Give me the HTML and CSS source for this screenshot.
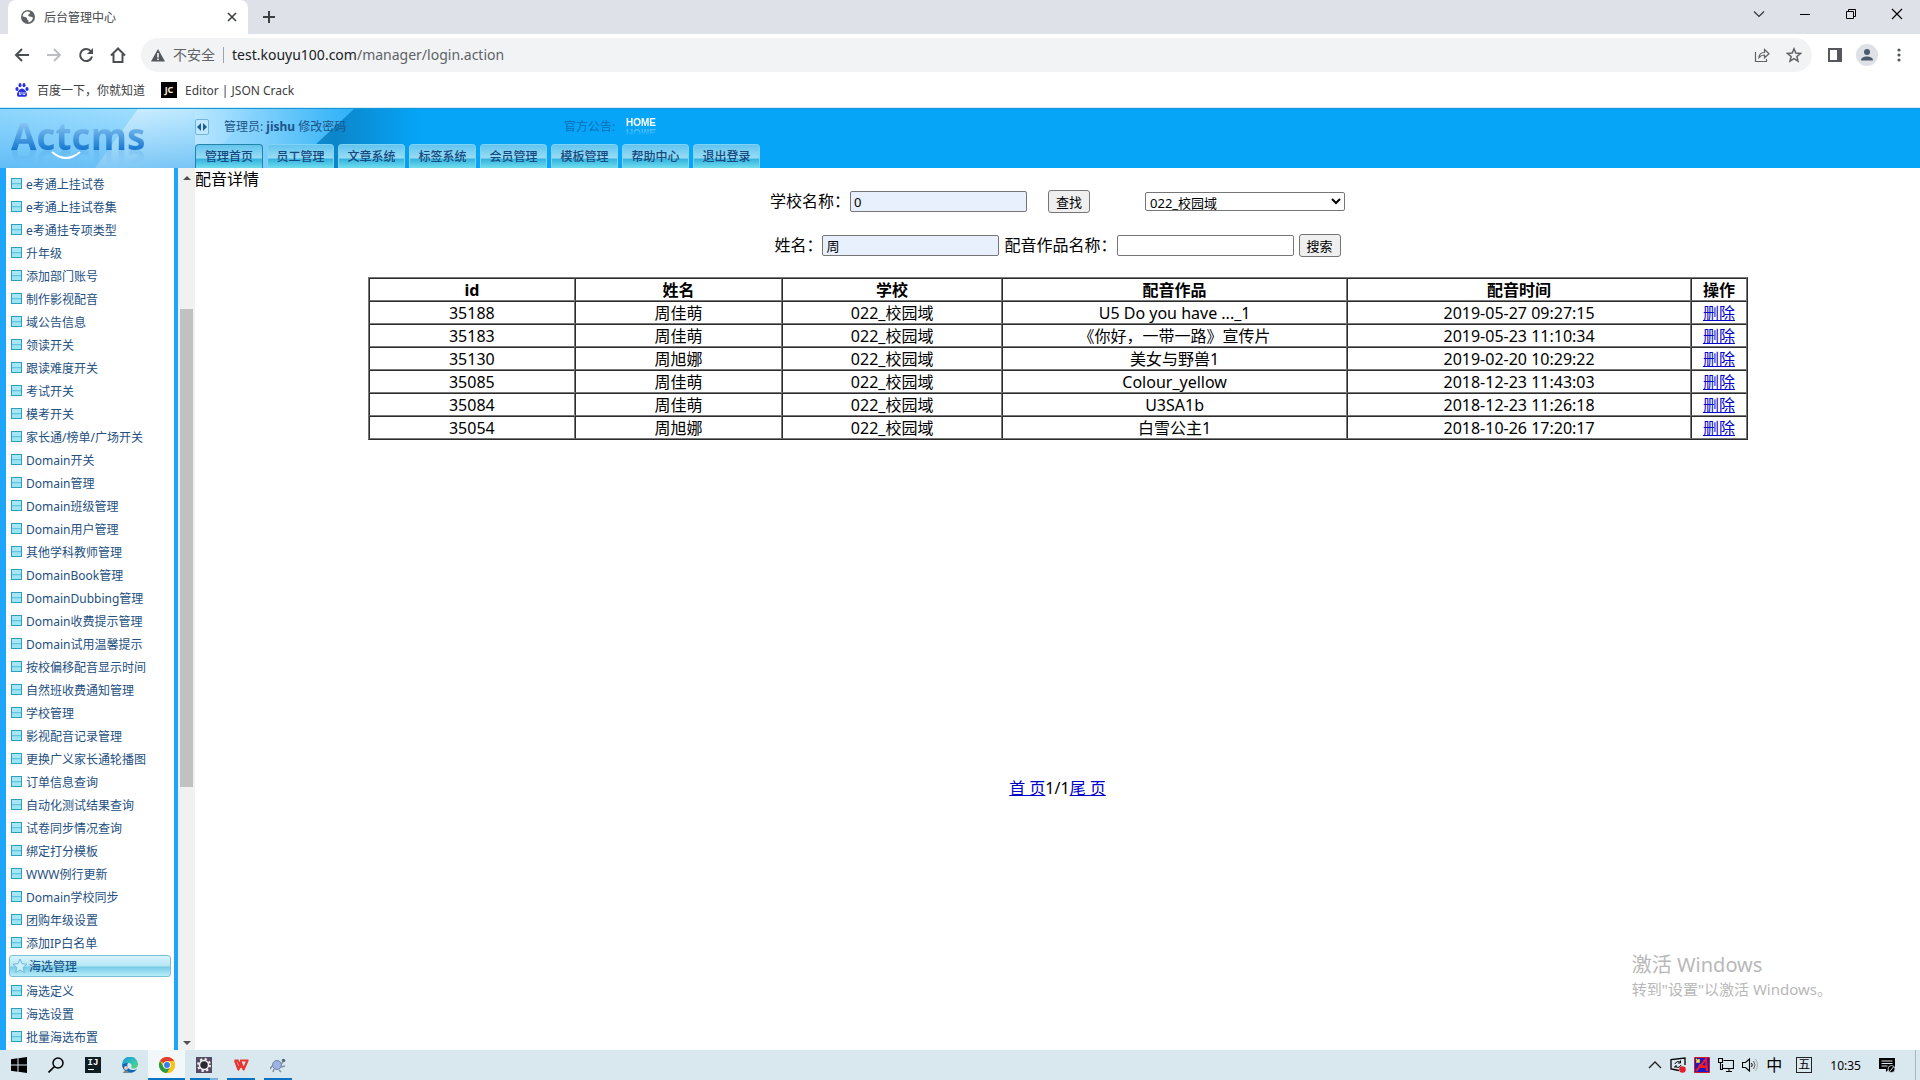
FILE: index.html
```html
<!DOCTYPE html>
<html lang="zh-CN">
<head>
<meta charset="utf-8">
<title>后台管理中心</title>
<link rel="stylesheet" href="styles.css">
</head>
<body>
<div class="screen">
  <div class="tabstrip">
    <div class="browser-tab">
      <svg width="16" height="16" viewBox="0 0 16 16"><circle cx="8" cy="8" r="7" fill="#5f6368"/><path d="M7 2.500c2 0 3 .6 3 1.600 0 1.200-1.600 1-1.800 2.200-.2 1 1 1.200 2 1.200 1.200 0 1.400 1 2.800 1-.3 2.500-2 4.500-4.500 5V12c0-1-1.500-1-1.500-2.200 0-1.300-1-1.500-2.200-1.800L2.600 7.200C3 4.500 4.800 2.700 7 2.500z" fill="#fff"/></svg>
      <span class="browser-tab-title">后台管理中心</span>
      <button class="icon-btn" aria-label="关闭标签"><svg width="10" height="10" viewBox="0 0 10 10"><path d="M1 1l8 8M9 1l-8 8" stroke="#3c4043" stroke-width="1.600"/></svg></button>
    </div>
    <button class="icon-btn" aria-label="新标签页"><svg width="14" height="14" viewBox="0 0 14 14"><path d="M7 1v12M1 7h12" stroke="#3c4043" stroke-width="2"/></svg></button>
    <div class="window-controls">
      <button class="icon-btn" aria-label="搜索标签"><svg width="12" height="12" viewBox="0 0 12 12"><path d="M1 3.500l5 5 5-5" fill="none" stroke="#333" stroke-width="1.200"/></svg></button>
      <button class="icon-btn" aria-label="最小化"><svg width="12" height="12" viewBox="0 0 12 12"><path d="M1 6.500h10" stroke="#000"/></svg></button>
      <button class="icon-btn" aria-label="还原"><svg width="12" height="12" viewBox="0 0 12 12"><path d="M1.500 3.500h7v7h-7zM3.500 3.500v-2h7v7h-2" fill="none" stroke="#000"/></svg></button>
      <button class="icon-btn" aria-label="关闭"><svg width="12" height="12" viewBox="0 0 12 12"><path d="M1 1l10 10M11 1L1 11" stroke="#000" stroke-width="1.200"/></svg></button>
    </div>
  </div>

  <div class="toolbar">
    <div class="nav-buttons">
      <button class="icon-btn" aria-label="后退"><svg width="16" height="16" viewBox="0 0 16 16"><path d="M15 8H2M8 2L2 8l6 6" fill="none" stroke="#4b4f54" stroke-width="2"/></svg></button>
      <button class="icon-btn" aria-label="前进"><svg width="16" height="16" viewBox="0 0 16 16"><path d="M1 8h13M8 2l6 6-6 6" fill="none" stroke="#bcbec1" stroke-width="2"/></svg></button>
      <button class="icon-btn" aria-label="刷新"><svg width="16" height="16" viewBox="0 0 16 16"><path d="M13 4.500A6 6 0 1 0 14 9.500" fill="none" stroke="#4b4f54" stroke-width="2"/><path d="M15 1v6H9z" fill="#4b4f54"/></svg></button>
      <button class="icon-btn" aria-label="主页"><svg width="16" height="16" viewBox="0 0 16 16"><path d="M1 8.500L8 1.500l7 7M3.500 7v8h9V7" fill="none" stroke="#4b4f54" stroke-width="2"/></svg></button>
    </div>
    <div class="omnibox">
      <svg width="14" height="14" viewBox="0 0 14 14"><path d="M7 1l7 12.500H0z" fill="#54585d"/><path d="M7 5v4.500M7 10.500v1.500" stroke="#fff" stroke-width="1.500"/></svg>
      <span class="insecure">不安全</span>
      <span class="url"><b>test.kouyu100.com</b>/manager/login.action</span>
      <button class="icon-btn" aria-label="分享"><svg width="16" height="16" viewBox="0 0 16 16"><path d="M1.500 5v9.500h11V12M5 10.500c.3-3.500 2.500-5 5.500-5V2.500L15 6.800l-4.500 4V8C8 8 6.500 8.800 5 10.500z" fill="none" stroke="#5f6368" stroke-width="1.200"/></svg></button>
      <button class="icon-btn" aria-label="收藏"><svg width="16" height="16" viewBox="0 0 16 16"><path d="M8 1.800l1.800 4.300 4.700.4-3.600 3 1.100 4.600L8 11.700l-4 2.400 1.100-4.600-3.600-3 4.700-.4z" fill="none" stroke="#5f6368" stroke-width="1.500"/></svg></button>
    </div>
    <div class="toolbar-right">
      <button class="icon-btn" aria-label="侧边栏"><svg width="14" height="14" viewBox="0 0 14 14"><path d="M1 1h12v12H1z" fill="none" stroke="#54585d" stroke-width="2"/><path d="M9 1h4v12H9z" fill="#54585d"/></svg></button>
      <button class="icon-btn" aria-label="用户"><svg width="22" height="22" viewBox="0 0 22 22"><circle cx="11" cy="11" r="11" fill="#dee1e8"/><circle cx="11" cy="8" r="3" fill="#4c5a6e"/><path d="M5 16.500c0-3 3-4 6-4s6 1 6 4z" fill="#4c5a6e"/></svg></button>
      <button class="icon-btn" aria-label="更多"><svg width="14" height="14" viewBox="0 0 14 14"><g fill="#54585d"><circle cx="7" cy="2" r="1.600"/><circle cx="7" cy="7" r="1.600"/><circle cx="7" cy="12" r="1.600"/></g></svg></button>
    </div>
  </div>

  <div class="bookmarks">
    <a href="#"><svg width="14" height="14" viewBox="0 0 14 14"><g fill="#2932e1"><ellipse cx="2" cy="6" rx="1.600" ry="2"/><ellipse cx="5" cy="2.200" rx="1.500" ry="2.100"/><ellipse cx="9" cy="2.200" rx="1.500" ry="2.100"/><ellipse cx="12" cy="6" rx="1.600" ry="2"/><path d="M7 5.500c2 0 5 3.500 5 6 0 3-3 2.200-5 2.200s-5 .8-5-2.200c0-2.500 3-6 5-6z"/></g><path d="M4.500 9v2.500h1.500V9M8 9v2.500h2V9" fill="none" stroke="#fff" stroke-width=".8"/></svg><span>百度一下，你就知道</span></a>
    <a href="#"><span class="jc">JC</span><span>Editor | JSON Crack</span></a>
  </div>

  <header class="site-header">
    <svg class="header-art" width="420" height="59" viewBox="0 0 420 59" preserveAspectRatio="none">
      <defs>
        <linearGradient id="sky" x1="0" y1="0" x2="1" y2="0"><stop offset="0" stop-color="#8ed6fd"/><stop offset=".45" stop-color="#a6e0ff"/><stop offset=".62" stop-color="#7fd0fc"/><stop offset=".8" stop-color="#3bb6f8"/><stop offset="1" stop-color="#06a5f8"/></linearGradient>
        <linearGradient id="ray" x1="0" y1="0" x2="1" y2="0"><stop offset="0" stop-color="#fff" stop-opacity=".6"/><stop offset="1" stop-color="#fff" stop-opacity="0"/></linearGradient>
        <linearGradient id="shade" x1="0" y1="0" x2="1" y2="0"><stop offset="0" stop-color="#1590d6"/><stop offset=".35" stop-color="#0c86ca"/><stop offset="1" stop-color="#06a5f8"/></linearGradient>
        <linearGradient id="deep" x1="0" y1="0" x2="0" y2="1"><stop offset="0" stop-color="#4bb4f5" stop-opacity="0"/><stop offset="1" stop-color="#3fa9ef" stop-opacity=".55"/></linearGradient>
      </defs>
      <path d="M0 0h420v59H0z" fill="url(#sky)"/>
      <path d="M138 0h120l-60 59H95z" fill="url(#ray)"/>
      <path d="M0 0h195v59H0z" fill="url(#deep)"/>
      <path d="M354 0h66v59H290z" fill="url(#shade)"/>
    </svg>
    <div class="logo"><span class="logo-text">Actcms</span><svg class="logo-smile" width="34" height="10" viewBox="0 0 34 10"><path d="M2 1q14 12 28 0" fill="none" stroke="#fff" stroke-width="2"/></svg></div>
    <div class="header-main">
      <div class="header-info">
        <button class="toggle" aria-label="切换侧栏"><svg width="10" height="8" viewBox="0 0 10 8"><path d="M4 0v8L0 4zM6 0v8l4-4z" fill="#1a5c96"/></svg></button>
        <span class="admin">管理员: <b>jishu</b> <a href="#">修改密码</a></span>
        <span class="notice">官方公告:</span>
        <a class="home" href="#">HOME</a>
      </div>
      <nav class="main-nav">
        <a href="#">管理首页</a><a href="#">员工管理</a><a href="#">文章系统</a><a href="#">标签系统</a><a href="#">会员管理</a><a href="#">模板管理</a><a href="#">帮助中心</a><a href="#">退出登录</a>
      </nav>
    </div>
  </header>

  <div class="workspace">
    <aside class="sidebar">
      <ul class="menu">
        <li><a href="#">e考通上挂试卷</a></li>
        <li><a href="#">e考通上挂试卷集</a></li>
        <li><a href="#">e考通挂专项类型</a></li>
        <li><a href="#">升年级</a></li>
        <li><a href="#">添加部门账号</a></li>
        <li><a href="#">制作影视配音</a></li>
        <li><a href="#">域公告信息</a></li>
        <li><a href="#">领读开关</a></li>
        <li><a href="#">跟读难度开关</a></li>
        <li><a href="#">考试开关</a></li>
        <li><a href="#">模考开关</a></li>
        <li><a href="#">家长通/榜单/广场开关</a></li>
        <li><a href="#">Domain开关</a></li>
        <li><a href="#">Domain管理</a></li>
        <li><a href="#">Domain班级管理</a></li>
        <li><a href="#">Domain用户管理</a></li>
        <li><a href="#">其他学科教师管理</a></li>
        <li><a href="#">DomainBook管理</a></li>
        <li><a href="#">DomainDubbing管理</a></li>
        <li><a href="#">Domain收费提示管理</a></li>
        <li><a href="#">Domain试用温馨提示</a></li>
        <li><a href="#">按校偏移配音显示时间</a></li>
        <li><a href="#">自然班收费通知管理</a></li>
        <li><a href="#">学校管理</a></li>
        <li><a href="#">影视配音记录管理</a></li>
        <li><a href="#">更换广义家长通轮播图</a></li>
        <li><a href="#">订单信息查询</a></li>
        <li><a href="#">自动化测试结果查询</a></li>
        <li><a href="#">试卷同步情况查询</a></li>
        <li><a href="#">绑定打分模板</a></li>
        <li><a href="#">WWW例行更新</a></li>
        <li><a href="#">Domain学校同步</a></li>
        <li><a href="#">团购年级设置</a></li>
        <li><a href="#">添加IP白名单</a></li>
      </ul>
      <h2 class="menu-head"><svg width="16" height="16" viewBox="0 0 16 16"><path d="M8 1l2 4.700 5 .5-3.800 3.300 1.200 5L8 12l-4.400 2.500 1.200-5L1 6.200l5-.5z" fill="#c9f0fb" stroke="#6db9da"/></svg>海选管理</h2>
      <ul class="menu">
        <li><a href="#">海选定义</a></li>
        <li><a href="#">海选设置</a></li>
        <li><a href="#">批量海选布置</a></li>
      </ul>
    </aside>
    <div class="scrollbar">
      <span class="arrow-up"></span>
      <span class="thumb"></span>
      <span class="arrow-down"></span>
    </div>

    <main class="content">
      <h1>配音详情</h1>
      <form class="filters school-row">
        <div class="field"><label for="school">学校名称：</label><input id="school" class="filled" type="text" value="0"></div>
        <button type="button" class="find">查找</button>
        <select aria-label="校园域" class="domain"><option>022_校园域</option></select>
      </form>
      <form class="filters">
        <div class="field"><label for="person">姓名：</label><input id="person" class="filled" type="text" value="周"></div>
        <div class="field"><label for="work">配音作品名称：</label><input id="work" type="text"></div>
        <button type="button">搜索</button>
      </form>
      <div class="results">
        <table>
          <colgroup><col class="c15"><col class="c15"><col class="c16"><col class="c25"><col class="c25"><col class="c4"></colgroup>
          <thead><tr><th>id</th><th>姓名</th><th>学校</th><th>配音作品</th><th>配音时间</th><th>操作</th></tr></thead>
          <tbody>
            <tr><td>35188</td><td>周佳萌</td><td>022_校园域</td><td>U5 Do you have ..._1</td><td>2019-05-27 09:27:15</td><td><a href="#">删除</a></td></tr>
            <tr><td>35183</td><td>周佳萌</td><td>022_校园域</td><td>《你好，一带一路》宣传片</td><td>2019-05-23 11:10:34</td><td><a href="#">删除</a></td></tr>
            <tr><td>35130</td><td>周旭娜</td><td>022_校园域</td><td>美女与野兽1</td><td>2019-02-20 10:29:22</td><td><a href="#">删除</a></td></tr>
            <tr><td>35085</td><td>周佳萌</td><td>022_校园域</td><td>Colour_yellow</td><td>2018-12-23 11:43:03</td><td><a href="#">删除</a></td></tr>
            <tr><td>35084</td><td>周佳萌</td><td>022_校园域</td><td>U3SA1b</td><td>2018-12-23 11:26:18</td><td><a href="#">删除</a></td></tr>
            <tr><td>35054</td><td>周旭娜</td><td>022_校园域</td><td>白雪公主1</td><td>2018-10-26 17:20:17</td><td><a href="#">删除</a></td></tr>
          </tbody>
        </table>
      </div>
      <div class="pager"><a href="#">首 页</a>1/1<a href="#">尾 页</a></div>
    </main>
    <div class="watermark"><p class="wm-title">激活 Windows</p><p>转到"设置"以激活 Windows。</p></div>
  </div>

  <footer class="taskbar">
    <button class="task" aria-label="开始"><svg width="16" height="16" viewBox="0 0 16 16"><path d="M0 2.300L6.500 1.300v6.200H0zM7.500 1.200L16 0v7.500H7.500zM0 8.500h6.500v6.200L0 13.700zM7.500 8.500H16V16l-8.500-1.200z"/></svg></button>
    <button class="task" aria-label="搜索"><svg width="16" height="16" viewBox="0 0 16 16"><circle cx="10" cy="6" r="5" fill="none" stroke="#000" stroke-width="1.500"/><path d="M6.500 9.500L.5 15.500" stroke="#000" stroke-width="1.600"/></svg></button>
    <button class="task" aria-label="IntelliJ"><span class="ij">IJ</span></button>
    <button class="task" aria-label="Edge"><svg width="16" height="16" viewBox="0 0 16 16"><defs><linearGradient id="edge" x1="0" y1="0" x2="1" y2="1"><stop offset="0" stop-color="#1793d8"/><stop offset=".6" stop-color="#35c5b5"/><stop offset="1" stop-color="#5fd267"/></linearGradient></defs><path d="M0 8a8 8 0 0 1 16-1c.2 3-2 4.500-4.500 4.500-2 0-2.500-1-2-2C10 8 9 6 6.500 6 3.500 6 1 8 0 10z" fill="url(#edge)"/><path d="M.2 8.500C1.500 6.500 4 5.700 6 6.300 4 9 6 13 10.500 13c2 0 3.500-.5 4.500-1.300A8 8 0 0 1 .2 8.500z" fill="#1167b5"/><circle cx="4" cy="11" r="2" fill="#e8c9b4"/><path d="M.5 16q3.500-5 7 0z" fill="#7d8792"/></svg></button>
    <button class="task active running" aria-label="Chrome"><svg width="16" height="16" viewBox="0 0 16 16"><circle cx="8" cy="8" r="8" fill="#fbc116"/><path d="M8 8L1.070 4A8 8 0 0 1 14.930 4z" fill="#e33b2e"/><path d="M1.070 4L8 16A8 8 0 0 1 1.070 4z" fill="#229a47"/><path d="M8 4.200h6.950L14.900 4H8z" fill="#e33b2e"/><path d="M4.700 9.900L8 16l3.300-6.100z" fill="#229a47"/><path d="M11.300 9.900L8 16a8 8 0 0 0 6.930-12H8z" fill="#fbc116"/><circle cx="8" cy="8" r="3.800" fill="#fff"/><circle cx="8" cy="8" r="3" fill="#3b7ded"/></svg></button>
    <button class="task running multi" aria-label="工具"><svg width="16" height="16" viewBox="0 0 16 16"><path d="M0 0h16v16H0z" fill="#544a63"/><circle cx="8" cy="8" r="6" fill="none" stroke="#eee" stroke-width="2" stroke-dasharray="2.300 2.400"/><circle cx="8" cy="8" r="4.500" fill="#2b2836" stroke="#eee" stroke-width="1.500"/></svg></button>
    <button class="task running" aria-label="WPS"><svg width="16" height="16" viewBox="0 0 16 16"><path d="M1.500 3.500h4M7 3.500h8.500M2 3.500l3.500 9 2.500-7 2.500 7 4-9M5 4l3 7" fill="none" stroke="#e8352c" stroke-width="2.200" stroke-linejoin="round"/></svg></button>
    <button class="task running" aria-label="客户端"><svg width="16" height="16" viewBox="0 0 16 16"><ellipse cx="7" cy="8" rx="4.500" ry="4.500" fill="#9bb2e2" stroke="#7384a8"/><circle cx="13.500" cy="3.500" r="1.800" fill="#536f83"/><path d="M2 9l-2 3M4 12l-1 3M9 13l2 2M11 10l4-1M11 7l2-2" stroke="#7e909e" stroke-width="1.500"/></svg></button>
    <div class="tray">
      <svg width="14" height="14" viewBox="0 0 14 14"><path d="M1 10l6-6 6 6" fill="none" stroke="#222" stroke-width="1.300"/></svg>
      <svg width="16" height="16" viewBox="0 0 16 16"><path d="M9 13.500L1 12V2.500L15 1v7" fill="none" stroke="#000" stroke-width="1.300"/><path d="M5 7c1-3 5-3 5.500-1M10.500 3.500V6H8M11 8c-1 3-5 3-5.500 1M5 11V9h2" fill="none" stroke="#000"/><circle cx="12.500" cy="12.500" r="3.300" fill="#e41f2b"/></svg>
      <svg width="16" height="16" viewBox="0 0 16 16"><path d="M.5.500h15v15H.5z" fill="#1c18c8" stroke="#d41b22"/><path d="M2 2l3 3M2 5h3V2" stroke="#ffe438" stroke-width="1.500"/><path d="M2 14L12 2l1 12M4 10h9l-8-2" fill="none" stroke="#f01c24" stroke-width="2"/></svg>
      <svg width="16" height="16" viewBox="0 0 16 16"><path d="M5.500 3.500h10v8h-11V7M8 14.500h6M11 11.500v3M.5 1.500h4v4h-4zM2.500 5.500v7H5" fill="none" stroke="#000" stroke-width="1.100"/></svg>
      <svg width="16" height="16" viewBox="0 0 16 16"><path d="M.5 5.500h3l4-3.500v12l-4-3.500h-3z" fill="none" stroke="#000" stroke-width="1.100"/><path d="M9.500 6q1.500 2 0 4" fill="none" stroke="#000"/><path d="M11.500 4q3 4 0 8" fill="none" stroke="#555"/><path d="M13.500 2q4 6 0 12" fill="none" stroke="#aaa"/></svg>
      <span class="ime">中</span>
      <span class="wubi">五</span>
      <span class="clock">10:35</span>
      <svg width="16" height="16" viewBox="0 0 16 16"><path d="M0 1h16v11h-6l-3 3v-3H0z"/><path d="M2.500 4h11M2.500 6.500h11M2.500 9h6" stroke="#d9e7ed"/><circle cx="12.500" cy="12" r="3.500" fill="#000" stroke="#d9e7ed" stroke-width=".8"/><path d="M11 14l3.500-4" stroke="#d9e7ed"/></svg>
    </div>
  </footer>
</div>
</body>
</html>
```
FILE: styles.css
```css
* { box-sizing: border-box; }
body { margin: 0; background: #fff; color: #000; font: 16px/21px "Noto Sans", "Noto Sans CJK SC", sans-serif; }
button, input, select { font-family: inherit; margin: 0; }
h1, h2, p, ul { margin: 0; padding: 0; }
a { color: inherit; text-decoration: none; }
svg { display: block; flex: none; }

.screen { height: 100vh; display: flex; flex-direction: column; overflow: hidden; }
.screen > * { flex: none; }
.icon-btn { display: flex; padding: 0; border: 0; background: none; }

/* browser chrome */
.tabstrip { display: flex; align-items: center; height: 34px; padding-left: 8px; background: #dee1e8; }
.browser-tab { display: flex; align-items: center; gap: 8px; width: 240px; height: 34px; margin-right: 14px; padding: 0 11px 0 12px; background: #fff; border-radius: 8px 8px 0 0; color: #45494d; font-size: 12px; }
.browser-tab-title { flex: 1; }
.window-controls { display: flex; gap: 34px; margin-left: auto; padding: 0 17px 6px 0; }
.toolbar { display: flex; align-items: center; height: 41px; padding: 0 14px; }
.nav-buttons { display: flex; gap: 16px; margin-right: 15px; }
.omnibox { flex: 1; display: flex; align-items: center; gap: 8px; height: 34px; padding: 0 10px; background: #f1f3f4; border-radius: 17px; color: #5f6368; font-size: 14px; }
.omnibox .icon-btn + .icon-btn { margin-left: 8px; }
.insecure { padding-right: 8px; border-right: 1px solid #a0a3a6; line-height: 16px; }
.url { flex: 1; }
.url b { color: #202124; font-weight: 400; }
.toolbar-right { display: flex; align-items: center; gap: 14px; margin-left: 16px; }
.bookmarks { display: flex; gap: 16px; height: 33px; padding: 0 15px 2px; border-bottom: 1px solid #d3eefb; }
.bookmarks a { display: flex; align-items: center; gap: 8px; color: #3c4043; font-size: 12px; }
.jc { width: 16px; height: 16px; background: #000; color: #f5e6d4; font-size: 9px; font-weight: 700; line-height: 16px; text-align: center; }

/* site header */
.site-header { position: relative; display: flex; height: 60px; background: #06a5f8; border-top: 1px solid #1895d4; color: #1c5489; font-size: 12px; }
.header-art { position: absolute; left: 0; top: 0; }
.logo { position: relative; width: 195px; padding: 5px 0 0 11px; }
.logo-text { display: block; width: 140px; height: 44px; font: 700 37px/44px "Open Sans", sans-serif; color: transparent; background: linear-gradient(#8cc8f5 8px, #1677d0 36px) text; -webkit-background-clip: text; -webkit-box-reflect: below -16px linear-gradient(transparent 50%, rgba(0, 0, 0, .25)); }
.logo-smile { position: absolute; left: 50px; top: 42px; }
.header-main { position: relative; display: flex; flex-direction: column; justify-content: space-between; }
.header-info { display: flex; align-items: center; height: 35px; }
.toggle { display: flex; align-items: center; justify-content: center; width: 14px; height: 16px; padding: 0; margin-right: 15px; background: #bfe8fd; border: 1px solid #6fb5e0; border-radius: 2px; }
.admin { width: 340px; }
.notice { width: 62px; color: #0a6fb8; }
.home { height: 12px; margin-bottom: 8px; color: #fff; font: 700 10px/12px "Liberation Sans", sans-serif; -webkit-box-reflect: below -3px linear-gradient(transparent 20%, rgba(0, 0, 0, .5)); }
.main-nav { display: flex; gap: 4px; }
.main-nav a { width: 67px; height: 24px; border: 1px solid #7fd3f5; border-bottom: 0; border-radius: 4px 4px 0 0; background: linear-gradient(#62c4ef, #98dcf4 13px, #34b3df 14px, #6fdcec); color: #16497f; font-weight: 500; line-height: 23px; text-align: center; }
.main-nav a:first-child { width: 68px; border-color: #2583a8; }

/* workspace */
.screen > .workspace { position: relative; flex: 1; min-height: 0; display: flex; }
.sidebar { flex: none; width: 178px; padding: 5px 3px 0; border: solid #1ea6fb; border-width: 0 4px 0 6px; overflow: hidden; color: #24507f; font-size: 12px; }
.menu { list-style: none; }
.menu li { display: flex; align-items: center; gap: 4px; height: 23px; padding-left: 2px; white-space: nowrap; }
.menu li::before { content: ""; flex: none; width: 9px; height: 9px; margin-bottom: 2px; border: 1px solid #2d9fbd; background: linear-gradient(#a5e6f7 45%, #55b9d6 45%, #9be5f5 65%); }
.menu-head { display: flex; align-items: center; gap: 1px; height: 22px; margin-bottom: 3px; padding-left: 2px; border: 1px solid #7cc0d6; border-radius: 3px; background: linear-gradient(#d8f3fc, #b5e6f6 10px, #76cbe7 11px, #b8ecf8); color: #1d5a8c; font-size: 12px; font-weight: 500; }
.scrollbar { flex: none; display: flex; flex-direction: column; align-items: center; width: 17px; padding: 8px 2px 5px; background: #f1f1f1; }
.arrow-up, .arrow-down { border: 4px solid transparent; }
.arrow-up { border-top: 0; border-bottom-color: #505050; margin-bottom: 129px; }
.arrow-down { border-bottom: 0; border-top-color: #505050; margin-top: auto; }
.thumb { width: 13px; flex: 0 0 55%; background: #c1c1c1; }
.content { flex: 1; }
.content h1 { font-size: 16px; font-weight: 400; line-height: 21px; padding-top: 1px; }
.filters { display: flex; justify-content: center; align-items: center; gap: 5px; height: 23px; margin-bottom: 21px; }
.filters + .results { margin-top: -1px; }
.school-row { gap: 21px; }
.field { display: flex; align-items: center; }
.filters input { width: 177px; height: 21px; padding: 0 3px; border: 1px solid #767676; border-radius: 2px; background: #fff; font-size: 13px; }
.filters .filled { background: #e8f0fe; }
.filters button { height: 23px; padding: 0 7px; border: 1px solid #767676; border-radius: 3px; background: #efefef; color: #000; font-size: 13px; line-height: 20px; }
.domain { width: 200px; height: 19px; margin-left: 34px; padding: 0; border: 1px solid #767676; border-radius: 2px; background: #fff; color: #000; font-size: 13px; line-height: 16px; }
.results { min-height: 501px; }
table { width: 80%; margin: 0 auto; table-layout: fixed; border-spacing: 0; border: 1px solid #666; border-color: #777 #2c2c2c #2c2c2c #777; }
th, td { height: 23px; padding: 2px 0 0; border: 1px solid; border-color: #2c2c2c #777 #777 #2c2c2c; line-height: 19px; text-align: center; }
.c15 { width: 15%; }
.c16 { width: 16%; }
.c25 { width: 25%; }
.c4 { width: 4%; }
td a, .pager a { color: #0000cc; text-decoration: underline; }
.pager { text-align: center; }
.watermark { position: absolute; right: 88px; bottom: 50px; color: #b8b8b8; font-size: 15px; }
.wm-title { font-size: 20px; line-height: 28px; }

/* taskbar */
.taskbar { display: flex; height: 30px; background: #d9e7ee; }
.task { display: flex; align-items: center; justify-content: center; width: 37px; padding: 0; border: 0; border-top: 2px solid transparent; border-bottom: 2px solid transparent; background: none; }
.running { background: linear-gradient(#0a73c4, #0a73c4) center bottom / 28px 2px no-repeat border-box; }
.multi { background-image: linear-gradient(90deg, #0a73c4 20px, #7fb2dc 20px); }
.active { background: #f2f7f9; border-top-color: #f2f7f9; border-bottom-color: #0a73c4; }
.ij { display: flex; flex-direction: column; width: 16px; height: 16px; padding: 1px 3px; background: #111d24; color: #fff; font: 700 9px/10px "Liberation Mono", monospace; }
.ij::after { content: ""; width: 6px; height: 1px; margin-top: 1px; background: #fff; }
.tray { display: flex; align-items: center; gap: 8px; margin-left: auto; margin-right: 4px; padding-right: 20px; border-right: 1px solid #aab6bc; }
.ime { width: 16px; }
.wubi { width: 16px; height: 16px; margin-left: 6px; border: 1px solid #222; font-size: 12px; line-height: 14px; text-align: center; }
.clock { margin: 0 10px; font-size: 12px; }
```
